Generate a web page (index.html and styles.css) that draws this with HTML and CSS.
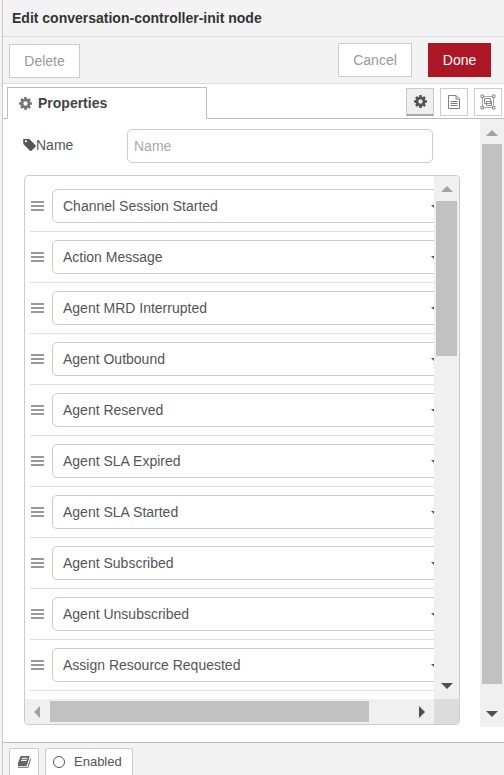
FILE: index.html
```html
<!DOCTYPE html>
<html lang="en">
<head>
<meta charset="utf-8">
<title>Edit conversation-controller-init node</title>
<link rel="stylesheet" href="styles.css">
</head>
<body>
<svg class="defs" width="0" height="0" aria-hidden="true">
  <symbol id="i-cog" viewBox="120 120 1552 1552"><path d="M1152 896q0-106-75-181t-181-75-181 75-75 181 75 181 181 75 181-75 75-181zm512-109v222q0 12-8 23t-20 13l-185 28q-19 54-39 91 35 50 107 138 10 12 10 25t-9 23q-27 37-99 108t-94 71q-12 0-26-9l-138-108q-44 23-91 38-16 136-29 186-7 28-36 28h-222q-14 0-24.5-8.5t-11.5-21.5l-28-184q-49-16-90-37l-141 107q-10 9-25 9-14 0-25-11-126-114-165-168-7-10-7-23 0-12 8-23 15-21 51-66.5t54-70.5q-27-50-41-99l-183-27q-13-2-21-12.5t-8-23.5v-222q0-12 8-23t19-13l186-28q14-46 39-92-40-57-107-138-10-12-10-24 0-10 9-23 26-36 98.5-107.5t94.5-71.5q13 0 26 10l138 107q44-23 91-38 16-136 29-186 7-28 36-28h222q14 0 24.5 8.5t11.5 21.5l28 184q49 16 90 37l142-107q9-9 24-9 13 0 25 10 129 119 165 170 7 8 7 22 0 12-8 23-15 21-51 66.5t-54 70.5q26 50 41 98l183 28q13 2 21 12.5t8 23.5z"/></symbol>
</svg>
<div class="tray">
  <header class="tray-title">Edit conversation-controller-init node</header>
  <div class="toolbar">
    <button class="btn btn-delete" type="button">Delete</button>
    <div class="toolbar-right">
      <button class="btn btn-cancel" type="button">Cancel</button>
      <button class="btn btn-done" type="button">Done</button>
    </div>
  </div>
  <div class="tabbar">
    <div class="tab"><svg class="tab-cog"><use href="#i-cog"/></svg>Properties</div>
    <div class="tab-buttons">
      <button class="tab-btn active" type="button" aria-label="Properties"><svg class="tab-btn-cog"><use href="#i-cog"/></svg></button>
      <button class="tab-btn" type="button" aria-label="Description">
        <svg class="tab-btn-svg" viewBox="0 0 14 16"><path d="M1.500 1.500h7.500l3.500 3.500v9.500h-11z M9 1.500v3.500h3.500 M3.500 7.500h7 M3.500 9.500h7 M3.500 11.500h7" fill="none" stroke="#808080" stroke-width="1"/></svg>
      </button>
      <button class="tab-btn" type="button" aria-label="Appearance">
        <svg class="tab-btn-svg wide" viewBox="0 0 16 16"><path d="M2.500 2.500h11v11h-11z" fill="none" stroke="#a8a8a8"/><path d="M4.500 4.500h6v5h-6z M6.500 7.500h5v4h-5z" fill="none" stroke="#8a8a8a"/><path d="M1 1h2.500v2.500h-2.500z M12.500 1h2.500v2.500h-2.500z M1 12.500h2.500v2.500h-2.500z M12.500 12.500h2.500v2.500h-2.500z" fill="#fff" stroke="#8a8a8a"/></svg>
      </button>
    </div>
  </div>
  <main class="content">
    <div class="form">
      <div class="name-row">
        <label class="name-label" for="name">
          <svg class="tag" viewBox="100 190 1560 1560"><path d="M576 448q0-53-37.500-90.500t-90.500-37.500-90.500 37.500-37.500 90.500 37.500 90.500 90.500 37.500 90.500-37.500 37.500-90.500zm1067 576q0 53-37 90l-491 492q-39 37-91 37-53 0-90-37l-715-716q-38-37-64.500-101t-26.500-117v-416q0-52 38-90t90-38h416q53 0 117 26.500t102 64.500l715 714q37 39 37 91z"/></svg>Name</label>
        <input class="name-input" id="name" type="text" placeholder="Name">
      </div>
      <div class="list-box">
        <div class="list-view">
          <div class="row"><span class="grip"></span><div class="sel"><span class="sel-text">Channel Session Started</span></div></div>
          <div class="row"><span class="grip"></span><div class="sel"><span class="sel-text">Action Message</span></div></div>
          <div class="row"><span class="grip"></span><div class="sel"><span class="sel-text">Agent MRD Interrupted</span></div></div>
          <div class="row"><span class="grip"></span><div class="sel"><span class="sel-text">Agent Outbound</span></div></div>
          <div class="row"><span class="grip"></span><div class="sel"><span class="sel-text">Agent Reserved</span></div></div>
          <div class="row"><span class="grip"></span><div class="sel"><span class="sel-text">Agent SLA Expired</span></div></div>
          <div class="row"><span class="grip"></span><div class="sel"><span class="sel-text">Agent SLA Started</span></div></div>
          <div class="row"><span class="grip"></span><div class="sel"><span class="sel-text">Agent Subscribed</span></div></div>
          <div class="row"><span class="grip"></span><div class="sel"><span class="sel-text">Agent Unsubscribed</span></div></div>
          <div class="row"><span class="grip"></span><div class="sel"><span class="sel-text">Assign Resource Requested</span></div></div>
        </div>
        <div class="vbar inner">
          <span class="arrow up"></span>
          <div class="vtrack"><div class="vthumb"></div></div>
          <span class="arrow down"></span>
        </div>
        <div class="hbar">
          <span class="arrow left"></span>
          <div class="htrack"><div class="hthumb"></div></div>
          <span class="arrow right"></span>
        </div>
        <div class="corner"></div>
      </div>
    </div>
    <div class="vbar outer">
      <span class="arrow up light"></span>
      <div class="vtrack"><div class="vthumb"></div></div>
      <span class="arrow down"></span>
    </div>
  </main>
  <footer class="footer">
    <button class="foot-btn book" type="button" aria-label="Help">
      <svg class="book-svg" viewBox="120 200 1560 1400"><path d="M1639 478q40 57 18 129l-275 906q-19 64-76.500 107.500t-122.500 43.500h-923q-77 0-148.500-53.500t-99.500-131.500q-24-67-2-127 0-4 3-27t4-37q1-8-3-21.500t-3-19.500q2-11 8-21t16.500-23.500 16.500-23.500q23-38 45-91.500t30-91.500q3-10 .5-30t-.5-28q3-11 17-28t17-23q21-36 42-92t25-90q1-9-2.500-32t.5-28q4-13 22-30.500t22-22.500q19-26 42.500-84.500t27.500-96.500q1-8-3-25.500t-2-26.500q2-8 9-18t18-23 17-21q8-12 16.500-30.500t15-35 16-36 19.500-32 26.500-23.500 36-11.500 47.500 5.500l-1 3q38-9 51-9h761q74 0 114 56t18 130l-274 906q-36 119-71.500 153.500t-128.500 34.500h-869q-27 0-38 15-11 16-1 43 24 70 144 70h923q29 0 56-15.500t35-41.500l300-987q7-22 5-57 38 15 59 43zm-1064 2q-4 13 2 22.500t20 9.500h608q13 0 25.500-9.500t16.500-22.500l21-64q4-13-2-22.500t-20-9.500h-608q-13 0-25.500 9.500t-16.500 22.500zm-83 256q-4 13 2 22.500t20 9.500h608q13 0 25.500-9.500t16.500-22.500l21-64q4-13-2-22.500t-20-9.500h-608q-13 0-25.500 9.500t-16.500 22.500z"/></svg>
    </button>
    <button class="foot-btn enabled" type="button"><span class="ring"></span>Enabled</button>
  </footer>
</div>
</body>
</html>
```

FILE: styles.css
```css
* { box-sizing: border-box; }
html, body { margin: 0; height: 100%; }
body {
  background: #f3f3f3;
  font-family: "Liberation Sans", Arial, sans-serif;
  font-size: 14px;
  color: #555;
  overflow: hidden;
}
.defs { display: block; height: 0; }
.tray {
  margin-left: 2px;
  height: 775px;
  border-left: 1px solid #c8c8c8;
  display: flex;
  flex-direction: column;
  background: #fff;
}
.tray-title {
  height: 37px;
  flex: none;
  padding: 10px 0 0 9px;
  font-weight: bold;
  font-size: 14px;
  line-height: 16px;
  color: #333;
  background: #f3f3f3;
  border-bottom: 1px solid #ddd;
}
.toolbar {
  height: 47px;
  flex: none;
  display: flex;
  justify-content: space-between;
  padding: 6px 13px 0 6px;
  background: #f3f3f3;
  border-bottom: 1px solid #ddd;
}
.toolbar-right { display: flex; gap: 16px; }
.btn {
  height: 34px;
  font: 14px "Liberation Sans", Arial, sans-serif;
  border: 1px solid #ccc;
  background: #fff;
  color: #999;
  padding: 0;
}
.btn-delete { width: 71px; margin-top: 1px; }
.btn-cancel { width: 74px; }
.btn-done { width: 63px; background: #ad1625; border-color: #ad1625; color: #fff; }
.tabbar {
  height: 35px;
  flex: none;
  display: flex;
  justify-content: space-between;
  padding: 3px 2px 0 4px;
  border-bottom: 1px solid #bbb;
  background: #fff;
}
.tab {
  width: 200px;
  height: 32px;
  padding: 0 0 0 11px;
  display: flex;
  align-items: center;
  gap: 6px;
  font-weight: bold;
  color: #444;
  background: #fff;
  border: 1px solid #bbb;
  border-bottom-color: #fff;
}
.tab-cog { width: 13px; height: 13px; fill: #777; }
.tab-buttons { display: flex; gap: 6px; padding-top: 1px; }
.tab-btn {
  width: 28px;
  height: 28px;
  padding: 0;
  background: #fff;
  border: 1px solid #ccc;
  display: flex;
  align-items: center;
  justify-content: center;
}
.tab-btn.active { background: #efefef; border-bottom: 2px solid #aaa; }
.tab-btn-cog { width: 13px; height: 13px; fill: #555; }
.tab-btn-svg { width: 14px; height: 16px; }
.tab-btn-svg.wide { width: 16px; height: 16px; }
.content {
  flex: 1;
  min-height: 0;
  display: flex;
  align-items: flex-start;
  background: #fff;
}
.form { flex: 1; min-width: 0; padding: 10px 20px 0 21px; }
.name-row { display: flex; align-items: center; height: 34px; }
.name-label {
  width: 103px;
  margin-left: -1px;
  margin-right: 1px;
  display: flex;
  align-items: center;
  color: #555;
  margin-top: -2px;
}
.tag { width: 13px; height: 13px; fill: #555; flex: none; }
.name-input {
  flex: none;
  width: 306px;
  height: 34px;
  padding: 0 6px;
  font: 14px "Liberation Sans", Arial, sans-serif;
  border: 1px solid #ccc;
  border-radius: 5px;
  color: #555;
}
.name-input::placeholder { color: #aaa; opacity: 1; }
.list-box {
  margin-top: 12px;
  width: 436px;
  height: 550px;
  border: 1px solid #ccc;
  border-radius: 4px;
  display: grid;
  grid-template-columns: 409px 25px;
  grid-template-rows: 523px 25px;
  overflow: hidden;
}
.list-view { overflow: hidden; padding: 0 0 0 5px; }
.row {
  height: 51px;
  display: flex;
  align-items: flex-start;
  padding-top: 8px;
  border-bottom: 1px solid #ddd;
  width: 404px;
}
.row:first-child { height: 56px; padding-top: 13px; }
.grip {
  flex: none;
  width: 13px;
  height: 10px;
  margin: 12px 8px 0 1px;
  border-top: 2px solid #999;
  border-bottom: 2px solid #999;
  position: relative;
}
.grip::after {
  content: "";
  position: absolute;
  left: 0;
  right: 0;
  top: 2px;
  height: 2px;
  background: #999;
}
.sel {
  flex: none;
  width: 400px;
  height: 34px;
  border: 1px solid #ccc;
  border-radius: 5px;
  padding: 0 10px;
  display: flex;
  align-items: center;
  position: relative;
}
.sel::after {
  content: "";
  position: absolute;
  left: 378px;
  top: 15px;
  border-left: 3px solid transparent;
  border-right: 3px solid transparent;
  border-top: 3px solid #555;
}
.sel-text { color: #555; }
.vbar { display: flex; flex-direction: column; align-items: center; background: #f0f0f0; }
.vtrack { flex: 1; align-self: stretch; padding: 0 2px; }
.vthumb { background: #c1c1c1; }
.arrow { flex: none; width: 0; height: 0; display: block; }
.arrow.up { border-left: 6px solid transparent; border-right: 6px solid transparent; border-bottom: 6px solid #a3a3a3; }
.arrow.down { border-left: 6px solid transparent; border-right: 6px solid transparent; border-top: 6px solid #505050; }
.arrow.left { border-top: 6px solid transparent; border-bottom: 6px solid transparent; border-right: 6px solid #a3a3a3; }
.arrow.right { border-top: 6px solid transparent; border-bottom: 6px solid transparent; border-left: 6px solid #505050; }
.inner { padding: 10px 0; }
.inner .vtrack { padding-top: 9px; padding-bottom: 0; }
.inner .vthumb { height: 155px; }
.outer { width: 24px; flex: none; height: 608px; padding: 11px 0 10px; }
.outer .vtrack { padding: 8px 2px 27px; display: flex; }
.outer .vthumb { flex: 1; }
.hbar {
  display: flex;
  align-items: center;
  background: #f0f0f0;
  padding: 0 9px;
}
.htrack { flex: 1; height: 100%; padding: 2px 50px 2px 10px; }
.hthumb { height: 21px; background: #c1c1c1; }
.corner { background: #dcdcdc; }
.footer {
  height: 33px;
  flex: none;
  display: flex;
  align-items: flex-end;
  gap: 6px;
  padding-left: 6px;
  background: #f3f3f3;
  border-top: 1px solid #bbb;
}
.foot-btn {
  height: 27px;
  padding: 0 0 1px;
  background: #fff;
  border: 1px solid #ccc;
  border-bottom: none;
  border-radius: 2px 2px 0 0;
  display: flex;
  align-items: center;
  font: 13px "Liberation Sans", Arial, sans-serif;
  color: #555;
}
.book { width: 30px; justify-content: center; }
.book-svg { width: 13px; height: 12px; fill: #666; }
.enabled { width: 88px; padding-left: 7px; }
.ring {
  width: 12px;
  height: 12px;
  border: 1px solid #555;
  border-radius: 50%;
  margin-right: 9px;
}
```
